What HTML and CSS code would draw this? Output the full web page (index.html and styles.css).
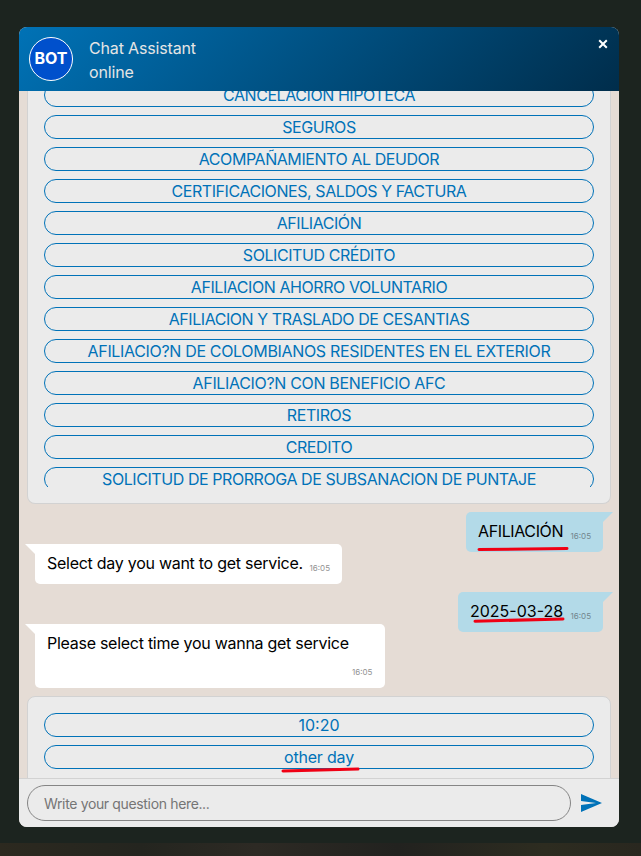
FILE: index.html
```html
<!DOCTYPE html>
<html lang="en">
<head>
<meta charset="utf-8">
<title>Chat Assistant</title>
<link rel="stylesheet" href="styles.css">
</head>
<body>
<main class="chat">
  <header class="header">
    <div class="avatar">BOT</div>
    <div class="title"><div>Chat Assistant</div><div>online</div></div>
    <button class="close" aria-label="Close"><svg width="10" height="10" viewBox="0 0 10 10"><path d="M1.2 1.2 8.8 8.8M8.8 1.2 1.2 8.8"/></svg></button>
  </header>
  <section class="messages">
    <div class="card card-top">
      <div class="options options-scroll">
        <button class="option">CANCELACION HIPOTECA</button>
        <button class="option">SEGUROS</button>
        <button class="option">ACOMPAÑAMIENTO AL DEUDOR</button>
        <button class="option">CERTIFICACIONES, SALDOS Y FACTURA</button>
        <button class="option">AFILIACIÓN</button>
        <button class="option">SOLICITUD CRÉDITO</button>
        <button class="option">AFILIACION AHORRO VOLUNTARIO</button>
        <button class="option">AFILIACION Y TRASLADO DE CESANTIAS</button>
        <button class="option wide">AFILIACIO?N DE COLOMBIANOS RESIDENTES EN EL EXTERIOR</button>
        <button class="option wide">AFILIACIO?N CON BENEFICIO AFC</button>
        <button class="option">RETIROS</button>
        <button class="option">CREDITO</button>
        <button class="option">SOLICITUD DE PRORROGA DE SUBSANACION DE PUNTAJE</button>
      </div>
    </div>
    <div class="bubble sent service"><span class="text caps">AFILIACIÓN</span><time>16:05</time>
      <svg class="mark" width="92" height="6" viewBox="0 0 92 6"><path d="M2 3.6 90 2.4"/></svg></div>
    <div class="bubble received day"><span class="text">Select day you want to get service.</span><time>16:05</time></div>
    <div class="bubble sent date"><span class="text digits">2025-03-28</span><time>16:05</time>
      <svg class="mark" width="92" height="6" viewBox="0 0 92 6"><path d="M2 4.2 90 2"/></svg></div>
    <div class="bubble received hour"><span class="text">Please select time you wanna get service</span><time>16:05</time></div>
    <div class="card card-bottom">
      <div class="options">
        <button class="option digits">10:20</button>
        <button class="option other">other day<svg class="mark" width="80" height="6" viewBox="0 0 80 6"><path d="M2 4 77 2"/></svg></button>
      </div>
    </div>
  </section>
  <footer class="footer">
    <input class="question" type="text" placeholder="Write your question here...">
    <button class="send" aria-label="Send"><svg width="21" height="18" viewBox="0 0 21 18"><path d="M0 0 21 9 0 18V11L15 9 0 7Z"/></svg></button>
  </footer>
</main>
</body>
</html>
```

FILE: styles.css
```css
* { box-sizing: border-box; }
body {
  margin: 0;
  height: 856px;
  padding: 27px 22px 0 19px;
  overflow: hidden;
  background: linear-gradient(90deg, #2c291f, #24251f 22%, #2d2a24 40%, #22221f 62%, #2d2c20 85%, #29271f) 0 843px / 100% 13px no-repeat, #1c241f;
  font: 16px/24px Inter, "Liberation Sans", sans-serif;
}
button { padding: 0; border: 0; background: none; font: inherit; }
.chat {
  display: flex;
  flex-direction: column;
  width: 600px;
  height: 800px;
  overflow: hidden;
  border-radius: 8px;
  background: #e5dcd5;
}
.header {
  display: flex;
  flex: 0 0 64px;
  align-items: center;
  padding: 0 10px;
  color: #e5e5e5;
  background: linear-gradient(135deg, #0072b6, #002d4b);
}
.avatar {
  width: 44px;
  height: 44px;
  margin-right: 16px;
  border: 1px solid #fff;
  border-radius: 50%;
  background: #0050cc;
  color: #fff;
  font-weight: 700;
  line-height: 41px;
  text-align: center;
}
.title { padding-top: 2px; letter-spacing: -.16px; }
.close {
  display: flex;
  align-self: flex-start;
  margin: 12px 1px 0 auto;
}
.close path { fill: none; stroke: #fff; stroke-width: 2; }
.messages {
  display: flex;
  flex: 1;
  min-height: 0;
  flex-direction: column;
  align-items: flex-start;
  overflow: hidden;
  padding: 0 8px;
}
.card {
  flex: none;
  width: 584px;
  border: 1px solid #d2d2d2;
  background: #ebebeb;
  padding: 16px;
}
.card-top {
  height: 413px;
  padding-top: 0;
  border-top: 0;
  border-radius: 0 0 8px 8px;
}
.card-bottom { height: 100px; margin-top: 8px; border-radius: 8px 8px 0 0; }
.options { display: flex; flex-direction: column; gap: 8px; }
.options-scroll { height: 404px; margin-top: -8px; overflow: hidden; }
.option {
  position: relative;
  flex: none;
  height: 24px;
  border: 1px solid #0072b8;
  border-radius: 12px;
  color: #0072b8;
  line-height: 22px;
  letter-spacing: -.43px;
}
.option.wide { letter-spacing: -.33px; }
.option.other { letter-spacing: -.2px; }
.bubble {
  position: relative;
  display: flex;
  flex: none;
  height: 40px;
  padding: 7px 12px 9px;
  border-radius: 5px;
  color: #000;
  white-space: nowrap;
}
.text { letter-spacing: -.27px; }
.text.caps { letter-spacing: -.38px; }
.digits, .option.digits, .text.digits { letter-spacing: 0; }
.bubble time {
  align-self: flex-end;
  margin-left: auto;
  color: #929292;
  font-size: 8px;
  line-height: 14px;
  letter-spacing: 0;
}
.sent { align-self: flex-end; margin-right: 8px; background: #b3dae8; }
.received { margin-left: 8px; background: #fff; }
.sent time { color: #71868e; }
.sent::after, .received::after {
  content: "";
  position: absolute;
  top: 0;
  width: 16px;
  height: 10px;
}
.sent::after {
  right: -10px;
  background: #b3dae8;
  clip-path: polygon(0 0, 100% 0, 6px 10px, 0 10px);
}
.received::after {
  left: -10px;
  background: #fff;
  clip-path: polygon(0 0, 100% 0, 100% 10px, 10px 10px);
}
.service { width: 137px; margin-top: 8px; }
.day { width: 307px; margin-top: -8px; }
.date { width: 145px; margin-top: 8px; }
.hour { width: 350px; height: 64px; margin-top: -8px; }
.hour .text { width: 302px; }
.hour time { margin-left: 3px; }
.mark { position: absolute; overflow: visible; }
.mark path { fill: none; stroke: #f00014; stroke-width: 3; stroke-linecap: round; }
.service .mark { left: 11px; top: 34px; }
.date .mark { left: 15px; top: 25px; }
.other .mark { left: 236px; top: 21px; }
.footer {
  position: relative;
  display: flex;
  flex: 0 0 49px;
  align-items: center;
  gap: 10px;
  padding: 0 8px;
  border-top: 1px solid #d2d2d2;
  background: #ebebeb;
}
.question {
  width: 544px;
  height: 36px;
  padding: 0 16px;
  border: 1px solid #858585;
  border-radius: 18px;
  background: transparent;
  font: 14px/20px Inter, "Liberation Sans", sans-serif;
  letter-spacing: -.35px;
}
.question::placeholder { color: #757575; opacity: 1; }
.send { display: flex; }
.send path { fill: #0072b8; }
```
